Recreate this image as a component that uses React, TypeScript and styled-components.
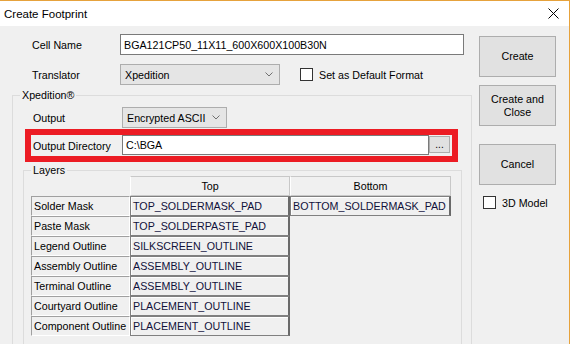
import { Fragment } from 'react';
import styled, { createGlobalStyle } from 'styled-components';

const GlobalStyle = createGlobalStyle`
  html, body {
    margin: 0;
    padding: 0;
    background: #f0f0f0;
  }
`;

const Window = styled.div`
  width: 570px;
  height: 344px;
  box-sizing: border-box;
  border-top: 1px solid #e6a23c;
  border-right: 1px solid #e6a23c;
  background: #f0f0f0;
  overflow: hidden;
  display: flex;
  flex-direction: column;
  font-family: "Liberation Sans", Arial, sans-serif;
  font-size: 10.7px;
  color: #000;
`;

const TitleBar = styled.div`
  height: 25px;
  flex: none;
  background: #fff;
  display: flex;
  align-items: center;
  justify-content: space-between;
  padding: 0 10px 0 4px;
  font-size: 11.5px;
`;

const Body = styled.div`
  display: flex;
  align-items: flex-start;
`;

const MainColumn = styled.div`
  width: 472px;
  flex: none;
  display: flex;
  flex-direction: column;
`;

const SideColumn = styled.div`
  width: 77px;
  margin-left: 7px;
  padding-top: 10px;
  display: flex;
  flex-direction: column;
`;

const FormRow = styled.div<{ $top: number }>`
  display: flex;
  align-items: center;
  height: 21px;
  margin-top: ${p => p.$top}px;
  padding-left: 32px;
`;

const Label = styled.span<{ $width: number }>`
  width: ${p => p.$width}px;
  flex: none;
  white-space: nowrap;
`;

const TextBox = styled.div<{ $width: number; $height?: number }>`
  width: ${p => p.$width}px;
  height: ${p => p.$height ?? 21}px;
  box-sizing: border-box;
  border: 1px solid #7a7a7a;
  background: #fff;
  display: flex;
  align-items: center;
  padding-left: 3px;
  flex: none;
  white-space: nowrap;
`;

const Combo = styled.div<{ $width: number }>`
  width: ${p => p.$width}px;
  height: 21px;
  box-sizing: border-box;
  border: 1px solid #adadad;
  background: #e5e5e5;
  display: flex;
  align-items: center;
  justify-content: space-between;
  padding: 0 6px 0 4px;
  flex: none;
`;

const CheckRow = styled.label<{ $left: number; $top?: number }>`
  display: flex;
  align-items: center;
  gap: 6px;
  margin-left: ${p => p.$left}px;
  margin-top: ${p => p.$top ?? 0}px;
  white-space: nowrap;
`;

const CheckBox = styled.span`
  width: 13px;
  height: 13px;
  box-sizing: border-box;
  border: 1px solid #333;
  background: #fff;
  flex: none;
`;

const Group = styled.div<{ $top: number; $left: number; $width: number }>`
  position: relative;
  box-sizing: border-box;
  margin: ${p => p.$top}px 0 0 ${p => p.$left}px;
  width: ${p => p.$width}px;
  border: 1px solid #dcdcdc;
`;

const GroupTitle = styled.span`
  position: absolute;
  top: -8px;
  left: 7px;
  padding: 0 2px;
  background: #f0f0f0;
  line-height: 14px;
`;

const XpeditionBody = styled.div`
  padding: 11px 0 40px 0;
  display: flex;
  flex-direction: column;
`;

const OutputRow = styled.div`
  display: flex;
  align-items: center;
  height: 21px;
  padding-left: 20px;
`;

const Highlight = styled.div`
  margin: 1px 0 0 12px;
  width: 433px;
  height: 33px;
  box-sizing: border-box;
  border: 6px solid #ec1c24;
  display: flex;
  align-items: flex-start;
  padding-left: 2px;
`;

const HighlightLabel = styled(Label)`
  align-self: center;
`;

const BrowseButton = styled.div`
  width: 21px;
  height: 17px;
  margin-top: 1px;
  box-sizing: border-box;
  border: 1px solid #adadad;
  background: #e1e1e1;
  display: flex;
  justify-content: center;
  align-items: flex-end;
  padding-bottom: 3px;
  font-size: 10px;
  line-height: 8px;
`;

const LayersBody = styled.div`
  padding: 5px 0 30px 7px;
`;

const LayerTable = styled.div`
  display: grid;
  grid-template-columns: 99px 160px 161px;
  grid-auto-rows: 20px;
`;

const HeaderCell = styled.div`
  box-sizing: border-box;
  border: 1px solid #c8c8c8;
  border-left-color: #fff;
  display: flex;
  align-items: center;
  justify-content: center;
`;

const RowHead = styled.div`
  box-sizing: border-box;
  border-top: 1px solid #a0a0a0;
  border-left: 1px solid #a0a0a0;
  border-bottom: 1px solid #fff;
  border-right: 1px solid #fff;
  display: flex;
  align-items: center;
  padding-left: 2px;
  white-space: nowrap;
  overflow: hidden;
`;

const DataCell = styled.div`
  box-sizing: border-box;
  border: 1px solid #808080;
  border-right: 2px solid #696969;
  box-shadow: inset 1px 1px 0 #fff;
  display: flex;
  align-items: center;
  padding-left: 2px;
  white-space: nowrap;
  overflow: hidden;
  color: #10103a;
`;

const Blank = styled.div``;

const Button = styled.div<{ $top: number }>`
  height: 41px;
  margin-top: ${p => p.$top}px;
  box-sizing: border-box;
  border: 1px solid #adadad;
  background: #e1e1e1;
  display: flex;
  align-items: center;
  justify-content: center;
  text-align: center;
  line-height: 13px;
  padding: 0 4px;
`;

const Chevron = () => (
  <svg width="8" height="5" viewBox="0 0 8 5">
    <path d="M0.5 0.5 L4 4 L7.5 0.5" fill="none" stroke="#707070" strokeWidth="1" />
  </svg>
);

const CloseIcon = () => (
  <svg width="11" height="11" viewBox="0 0 11 11">
    <path d="M0.5 0.5 L10.5 10.5 M10.5 0.5 L0.5 10.5" stroke="#000" strokeWidth="1" />
  </svg>
);

const layers = [
  { name: 'Solder Mask', top: 'TOP_SOLDERMASK_PAD', bottom: 'BOTTOM_SOLDERMASK_PAD' },
  { name: 'Paste Mask', top: 'TOP_SOLDERPASTE_PAD' },
  { name: 'Legend Outline', top: 'SILKSCREEN_OUTLINE' },
  { name: 'Assembly Outline', top: 'ASSEMBLY_OUTLINE' },
  { name: 'Terminal Outline', top: 'ASSEMBLY_OUTLINE' },
  { name: 'Courtyard Outline', top: 'PLACEMENT_OUTLINE' },
  { name: 'Component Outline', top: 'PLACEMENT_OUTLINE' },
];

const App = () => {
  return (
    <>
      <GlobalStyle />
      <Window>
        <TitleBar>
          <span>Create Footprint</span>
          <CloseIcon />
        </TitleBar>
        <Body>
          <MainColumn>
            <FormRow $top={8}>
              <Label $width={88}>Cell Name</Label>
              <TextBox $width={344}>BGA121CP50_11X11_600X600X100B30N</TextBox>
            </FormRow>
            <FormRow $top={9}>
              <Label $width={88}>Translator</Label>
              <Combo $width={160}>
                <span>Xpedition</span>
                <Chevron />
              </Combo>
              <CheckRow $left={20}>
                <CheckBox />
                Set as Default Format
              </CheckRow>
            </FormRow>

            <Group $top={10} $left={12} $width={460}>
              <GroupTitle>Xpedition®</GroupTitle>
              <XpeditionBody>
                <OutputRow>
                  <Label $width={89}>Output</Label>
                  <Combo $width={105}>
                    <span>Encrypted ASCII</span>
                    <Chevron />
                  </Combo>
                </OutputRow>
                <Highlight>
                  <HighlightLabel $width={89}>Output Directory</HighlightLabel>
                  <TextBox $width={307} $height={20}>C:\BGA</TextBox>
                  <BrowseButton>...</BrowseButton>
                </Highlight>

                <Group $top={8} $left={10} $width={439}>
                  <GroupTitle>Layers</GroupTitle>
                  <LayersBody>
                    <LayerTable>
                      <Blank />
                      <HeaderCell>Top</HeaderCell>
                      <HeaderCell>Bottom</HeaderCell>
                      {layers.map(layer => (
                        <Fragment key={layer.name}>
                          <RowHead>{layer.name}</RowHead>
                          <DataCell>{layer.top}</DataCell>
                          {layer.bottom ? <DataCell>{layer.bottom}</DataCell> : <Blank />}
                        </Fragment>
                      ))}
                    </LayerTable>
                  </LayersBody>
                </Group>
              </XpeditionBody>
            </Group>
          </MainColumn>

          <SideColumn>
            <Button $top={0}>Create</Button>
            <Button $top={8}>Create and Close</Button>
            <Button $top={18}>Cancel</Button>
            <CheckRow $left={4} $top={11}>
              <CheckBox />
              3D Model
            </CheckRow>
          </SideColumn>
        </Body>
      </Window>
    </>
  );
};

export default App;
